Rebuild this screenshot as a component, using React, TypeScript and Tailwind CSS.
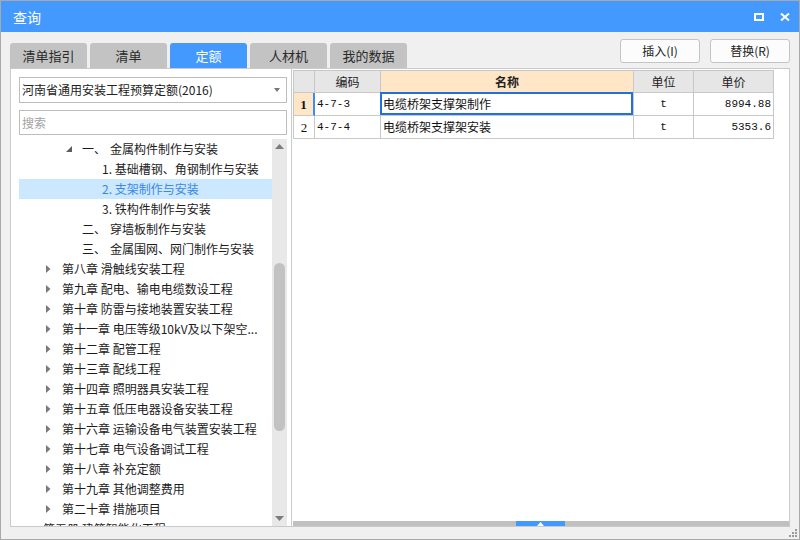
import React from 'react';

// query dialog: 定额 tab with tree on the left, result grid on the right

const TABS = ['清单指引', '清单', '定额', '人材机', '我的数据'];

const CHAPTERS = [
  '第八章 滑触线安装工程',
  '第九章 配电、输电电缆数设工程',
  '第十章 防雷与接地装置安装工程',
  '第十一章 电压等级10kV及以下架空...',
  '第十二章 配管工程',
  '第十三章 配线工程',
  '第十四章 照明器具安装工程',
  '第十五章 低压电器设备安装工程',
  '第十六章 运输设备电气装置安装工程',
  '第十七章 电气设备调试工程',
  '第十八章 补充定额',
  '第十九章 其他调整费用',
  '第二十章 措施项目',
];

const ROWS = [
  { no: '1', code: '4-7-3', name: '电缆桥架支撑架制作', unit: 't', price: '8994.88' },
  { no: '2', code: '4-7-4', name: '电缆桥架支撑架安装', unit: 't', price: '5353.6' },
];

const MONO = "font-['Liberation_Mono','Noto_Sans_CJK_SC',monospace]";

function ClosedArrow() {
  return (
    <svg width="5" height="8" viewBox="0 0 5 8">
      <path d="M0 0L4.5 4L0 8Z" fill="#7a7a7a" />
    </svg>
  );
}

function OpenArrow() {
  return (
    <svg width="6" height="6" viewBox="0 0 6 6">
      <path d="M6 0V6H0Z" fill="#5c5c5c" />
    </svg>
  );
}

function TreeRow({ className, selected, children }: { className: string; selected?: boolean; children: React.ReactNode }) {
  return (
    <div
      className={`h-[20px] flex items-center whitespace-nowrap text-[12px] leading-none ${className} ${
        selected ? 'bg-[#cce8ff] text-[#3a87e6]' : 'text-[#1c1c1c]'
      }`}
    >
      {children}
    </div>
  );
}

function Tree() {
  return (
    <div className="flex-1 flex min-h-0 mt-[4px]">
      <div className="w-[253px] overflow-hidden">
        <TreeRow className="pl-[47px]">
          <span className="w-[16px] flex items-center">
            <OpenArrow />
          </span>
          <span>一、</span>
          <span className="ml-[4px]">金属构件制作与安装</span>
        </TreeRow>
        <TreeRow className="pl-[83px]">1. 基础槽钢、角钢制作与安装</TreeRow>
        <TreeRow className="pl-[83px]" selected>
          2. 支架制作与安装
        </TreeRow>
        <TreeRow className="pl-[83px]">3. 铁构件制作与安装</TreeRow>
        <TreeRow className="pl-[63px]">
          <span>二、</span>
          <span className="ml-[4px]">穿墙板制作与安装</span>
        </TreeRow>
        <TreeRow className="pl-[63px]">
          <span>三、</span>
          <span className="ml-[4px]">金属围网、网门制作与安装</span>
        </TreeRow>
        {CHAPTERS.map((c) => (
          <TreeRow key={c} className="pl-[27px]">
            <span className="w-[16px] flex items-center">
              <ClosedArrow />
            </span>
            <span>{c}</span>
          </TreeRow>
        ))}
        <TreeRow className="pl-[24px]">第五册 建筑智能化工程</TreeRow>
      </div>

      {/* vertical scrollbar */}
      <div className="w-[15px] bg-[#e8e8e8] flex flex-col items-center">
        <div className="h-[14px] flex items-center justify-center">
          <svg width="9" height="5" viewBox="0 0 9 5">
            <path d="M0 5L4.5 0L9 5Z" fill="#7c7c7c" />
          </svg>
        </div>
        <div className="mt-[110px] w-[11px] h-[168px] rounded-full bg-[#c2c2c2]" />
        <div className="mt-auto h-[10px] flex items-start justify-center">
          <svg width="9" height="5" viewBox="0 0 9 5">
            <path d="M0 0L9 0L4.5 5Z" fill="#7c7c7c" />
          </svg>
        </div>
      </div>
    </div>
  );
}

function LeftPanel() {
  return (
    <div className="w-[282px] h-full border border-[#cacaca] bg-white pt-[8px] pl-[8px] pr-[4px] flex flex-col">
      <div className="h-[26px] border border-[#bdbdbd] flex items-center pl-[2px] pr-[6px]">
        <span className="text-[12px] text-[#222] leading-none">河南省通用安装工程预算定额(2016)</span>
        <svg className="ml-auto" width="6" height="4" viewBox="0 0 6 4">
          <path d="M0 0H6L3 4Z" fill="#777" />
        </svg>
      </div>
      <div className="mt-[7px] h-[25px] border border-[#bdbdbd] flex items-center pl-[2px]">
        <span className="text-[12px] text-[#a3a3a3] leading-none">搜索</span>
      </div>
      <Tree />
    </div>
  );
}

function HeadCell({ w, children, name }: { w: string; children?: React.ReactNode; name?: boolean }) {
  return (
    <div
      className={`${w} h-full border-r border-b border-[#c8c8c8] flex items-center justify-center text-[12px] leading-none text-[#222] ${
        name ? 'bg-[#ffe6c7] font-bold' : 'bg-[#e6e6e6]'
      }`}
    >
      {children}
    </div>
  );
}

function Grid() {
  return (
    <div className="w-[481px] border-l border-t border-[#c8c8c8]">
      <div className="h-[22px] flex">
        <HeadCell w="w-[21px]" />
        <HeadCell w="w-[66px]">编码</HeadCell>
        <HeadCell w="w-[253px]" name>
          名称
        </HeadCell>
        <HeadCell w="w-[60px]">单位</HeadCell>
        <HeadCell w="w-[80px]">单价</HeadCell>
      </div>
      {ROWS.map((r, i) => {
        const active = i === 0;
        return (
          <div key={r.code} className="h-[23px] flex">
            <div
              className={`w-[21px] border-b flex items-center justify-center font-['Liberation_Serif',serif] text-[13px] leading-none text-[#111] border-[#c8c8c8] ${
                active ? 'bg-[#ffe6c7] font-bold border-r-2 border-r-[#3d8cf2]' : 'bg-white border-r'
              }`}
            >
              {r.no}
            </div>
            <div className={`w-[66px] border-r border-b border-[#c8c8c8] flex items-center pl-[2px] text-[11px] leading-none text-[#111] ${MONO}`}>
              {r.code}
            </div>
            <div className="w-[253px] border-r border-b border-[#c8c8c8] flex items-center pl-[2px] text-[12px] leading-none text-[#111] relative">
              {r.name}
              {active && <div className="absolute -left-[1px] -top-[1px] right-0 bottom-0 border-2 border-[#1f6fe6]" />}
            </div>
            <div className={`w-[60px] border-r border-b border-[#c8c8c8] flex items-center justify-center text-[11px] leading-none text-[#111] ${MONO}`}>
              {r.unit}
            </div>
            <div className={`w-[80px] border-r border-b border-[#c8c8c8] flex items-center justify-end pr-[2px] text-[11px] leading-none text-[#111] ${MONO}`}>
              {r.price}
            </div>
          </div>
        );
      })}
    </div>
  );
}

function RightPanel() {
  return (
    <div className="w-[498px] h-full border-t border-r border-b border-[#cacaca] bg-white pt-[1px] pl-[1px] flex flex-col">
      <div className="flex-1">
        <Grid />
      </div>
      {/* horizontal splitter bar */}
      <div className="h-[5px] bg-[#c0c0c0] flex">
        <div className="ml-[223px] w-[49px] h-full bg-[#4499ff] flex items-center justify-center">
          <svg width="7" height="4" viewBox="0 0 7 4">
            <path d="M0 4L3.5 0L7 4Z" fill="#fff" />
          </svg>
        </div>
      </div>
    </div>
  );
}

export default function App() {
  return (
    <div className="w-[800px] h-[540px] border border-[#a9a9a9] bg-[#f0f0f0] flex flex-col relative font-['Noto_Sans_CJK_SC',sans-serif]">
      {/* Title bar */}
      <div className="h-[31px] bg-[#4499ff] flex items-center pl-[12px] pr-[9px] text-white">
        <span className="text-[14px] leading-none">查询</span>
        <div className="ml-auto flex items-center gap-[16px]">
          <svg width="10" height="8" viewBox="0 0 10 8">
            <rect x="1" y="1" width="8" height="6" stroke="#fff" strokeWidth="2" fill="none" />
          </svg>
          <svg width="10" height="8" viewBox="0 0 10 8">
            <path d="M1 0.5L9 7.5M9 0.5L1 7.5" stroke="#fff" strokeWidth="2" />
          </svg>
        </div>
      </div>

      <div className="flex-1 flex flex-col px-[9px] pt-[7px]">
        {/* Tabs + actions */}
        <div className="h-[29px] flex">
          <div className="self-end flex gap-[3px]">
            {TABS.map((t) => (
              <div
                key={t}
                className={`w-[77px] h-[25px] rounded-t-[3px] flex items-center justify-center text-[13px] leading-none ${
                  t === '定额' ? 'bg-[#4499ff] text-white' : 'bg-[#c3c3c3] text-[#2a2a2a]'
                }`}
              >
                {t}
              </div>
            ))}
          </div>
          <div className="ml-auto self-start flex gap-[10px]">
            <button className="w-[80px] h-[24px] bg-[#fcfcfc] border border-[#c4c4c4] rounded-[3px] text-[12px] leading-none text-[#222]">
              插入(I)
            </button>
            <button className="w-[80px] h-[24px] bg-[#fcfcfc] border border-[#c4c4c4] rounded-[3px] text-[12px] leading-none text-[#222]">
              替换(R)
            </button>
          </div>
        </div>

        <div className="h-[459px] flex">
          <LeftPanel />
          <RightPanel />
        </div>
      </div>

      {/* resize grip */}
      <svg className="absolute right-[2px] bottom-[2px]" width="9" height="9" viewBox="0 0 9 9">
        <rect x="7" y="1" width="2" height="2" fill="#9a9a9a" />
        <rect x="4" y="4" width="2" height="2" fill="#9a9a9a" />
        <rect x="7" y="4" width="2" height="2" fill="#9a9a9a" />
        <rect x="1" y="7" width="2" height="2" fill="#9a9a9a" />
        <rect x="4" y="7" width="2" height="2" fill="#9a9a9a" />
        <rect x="7" y="7" width="2" height="2" fill="#9a9a9a" />
      </svg>
    </div>
  );
}
